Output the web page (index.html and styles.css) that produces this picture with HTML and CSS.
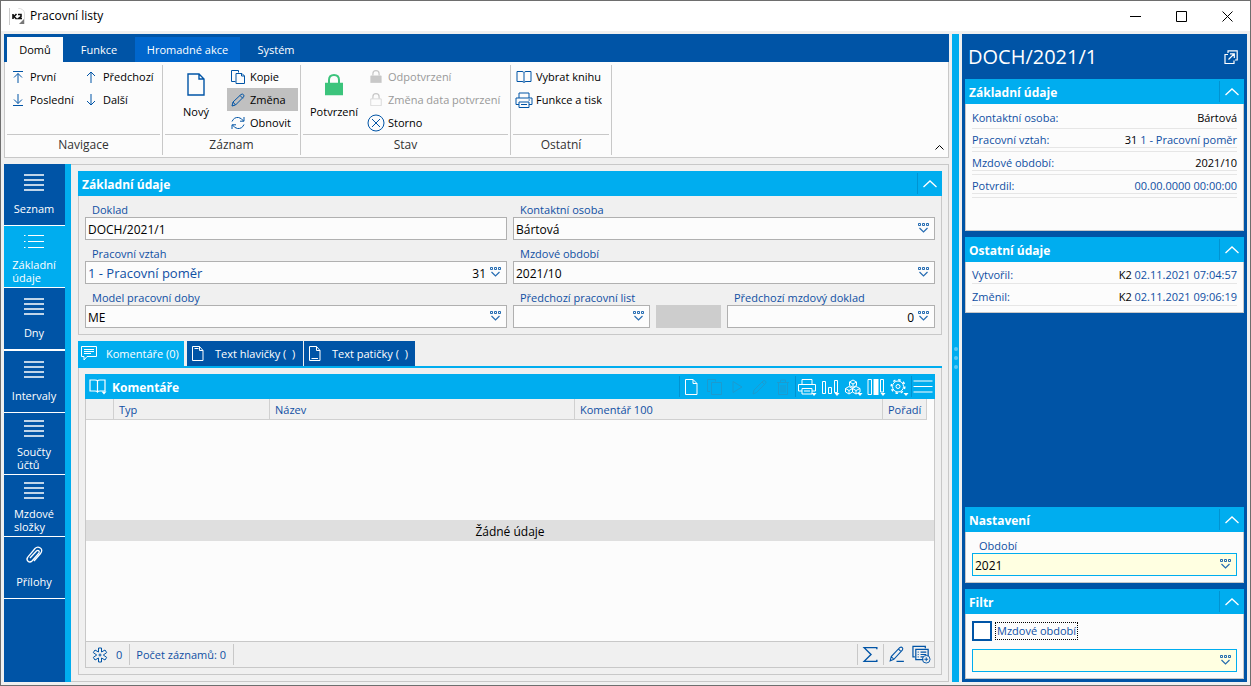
FILE: index.html
```html
<!DOCTYPE html>
<html lang="cs">
<head>
<meta charset="utf-8">
<title>Pracovní listy</title>
<link rel="stylesheet" href="styles.css">
</head>
<body>
<svg class="sprite" aria-hidden="true">
  <symbol id="lookup" viewBox="0 0 12 11"><path d="M.5 .5h2v2h-2zM4.500 .5h2v2h-2zM8.500 .5h2v2h-2z" stroke-width="1" stroke-opacity=".85"/><path d="M1.500 5L5.500 9L9.500 5" stroke-width="1.200" stroke-opacity=".85"/></symbol>
  <symbol id="chevron" viewBox="0 0 14 8"><path d="M.5 7L7 1L13.500 7" stroke-width="1.300"/></symbol>
  <symbol id="lines" viewBox="0 0 20 18"><path d="M0 1h20M0 6h20M0 11h20M0 16h20" stroke-width="1.400"/></symbol>
  <symbol id="pencil" viewBox="0 0 14 14"><path d="M1 13l1-4 8-7.500q1.500-1 2.500.2t0 2.300L4.500 12zM9 2.500l2.800 2.800M2 9l2.500 3"/></symbol>
  <symbol id="page" viewBox="0 0 18 23"><path d="M1 1h11l5 5v16H1zM12 1v5h5"/></symbol>
  <symbol id="copy" viewBox="0 0 14 14"><path d="M4.500 11.500H.5V.5h7v2M5 3.500h6l2.500 2.500v7.500H5zM10.500 3.500V6h3"/></symbol>
  <symbol id="printer" viewBox="0 0 18 16"><path d="M4 6V1h10v5M4 12.500H1V6h16v6.500h-3M4 10h10v5.500H4zM6 12.500h6M13.500 8h1.500"/></symbol>
  <symbol id="book" viewBox="0 0 16 13"><path d="M8 12V2Q7.500 1 6 1H1v10h5q1.500 0 2 1 .5-1 2-1h5V1h-5Q8.500 1 8 2"/></symbol>
  <symbol id="lock" viewBox="0 0 18 21"><path d="M4 9V6q0-5 5-5t5 5v3" stroke-width="2"/><path class="lock-body" d="M.5 9.500h17v11H.5z"/></symbol>
</svg>
<div class="window">
  <header class="titlebar">
    <svg class="logo" viewBox="0 0 17 17"><path d="M.5 0v17" stroke="#ccc"/><path d="M9 0q6 1 6.500 5v11" stroke="#ddd"/><path d="M15 11v5h-5z" fill="#777" stroke="none"/><path d="M4 6v5M7.500 6L5 8.500 7.500 11M9 6.500h3v2L9.500 10.500H13" stroke="#111" stroke-width="1.600"/></svg>
    <h1 class="window-title">Pracovní listy</h1>
    <div class="window-controls">
      <button aria-label="Minimalizovat"><svg viewBox="0 0 11 11"><path d="M0 5.500h11"/></svg></button>
      <button aria-label="Maximalizovat"><svg viewBox="0 0 11 11"><path d="M.5 .5h10v10H.5z"/></svg></button>
      <button aria-label="Zavřít"><svg viewBox="0 0 11 11"><path d="M.5 .5l10 10M10.500 .5l-10 10"/></svg></button>
    </div>
  </header>
  <div class="workspace">
    <div class="left">
      <nav class="ribbon-tabs">
        <button class="ribbon-tab active">Domů</button>
        <button class="ribbon-tab">Funkce</button>
        <button class="ribbon-tab highlight">Hromadné akce</button>
        <button class="ribbon-tab">Systém</button>
      </nav>
      <div class="ribbon">
        <section class="group nav-group">
          <div class="commands">
            <div class="command-column">
              <button class="command"><svg viewBox="0 0 12 12"><path d="M1 .5h10M6 12V2.500M2 6.500l4-4 4 4"/></svg>První</button>
              <button class="command"><svg viewBox="0 0 12 12"><path d="M1 11.500h10M6 0v9.500M2 5.500l4 4 4-4"/></svg>Poslední</button>
            </div>
            <div class="command-column">
              <button class="command"><svg viewBox="0 0 12 12"><path d="M6 12V1M2 5l4-4 4 4"/></svg>Předchozí</button>
              <button class="command"><svg viewBox="0 0 12 12"><path d="M6 0v11M2 7l4 4 4-4"/></svg>Další</button>
            </div>
          </div>
          <h2 class="group-label">Navigace</h2>
        </section>
        <section class="group record-group">
          <div class="commands">
            <button class="big-command"><svg class="page-icon"><use href="#page"/></svg>Nový</button>
            <div class="command-column">
              <button class="command"><svg><use href="#copy"/></svg>Kopie</button>
              <button class="command pressed"><svg><use href="#pencil"/></svg>Změna</button>
              <button class="command"><svg viewBox="0 0 14 14"><path d="M1 5.500Q3 1 7.500 1.500 10.500 2 12.500 5M13 1v4.200H9M13 8.500Q11 13 6.500 12.500 3.500 12 1.500 9M1 13V8.800h4"/></svg>Obnovit</button>
            </div>
          </div>
          <h2 class="group-label">Záznam</h2>
        </section>
        <section class="group state-group">
          <div class="commands">
            <button class="big-command confirm"><svg class="page-icon"><use href="#lock"/></svg>Potvrzení</button>
            <div class="command-column">
              <button class="command locked" disabled><svg><use href="#lock"/></svg>Odpotvrzení</button>
              <button class="command unlocked" disabled><svg><use href="#lock"/></svg>Změna data potvrzení</button>
              <button class="command"><svg class="wide" viewBox="0 0 18 18"><circle cx="9" cy="9" r="8"/><path d="M5 5l8 8M13 5l-8 8"/></svg>Storno</button>
            </div>
          </div>
          <h2 class="group-label">Stav</h2>
        </section>
        <section class="group other-group">
          <div class="commands">
            <div class="command-column">
              <button class="command"><svg class="book-icon"><use href="#book"/></svg>Vybrat knihu</button>
              <button class="command"><svg class="wide"><use href="#printer"/></svg>Funkce a tisk</button>
            </div>
          </div>
          <h2 class="group-label">Ostatní</h2>
        </section>
        <button class="collapse-ribbon" aria-label="Sbalit pás karet"><svg viewBox="0 0 9 5"><path d="M.5 4.500l4-4 4 4"/></svg></button>
      </div>
      <div class="content">
        <nav class="sidebar">
          <button class="side-item"><svg><use href="#lines"/></svg><span>Seznam</span></button>
          <button class="side-item active"><svg viewBox="0 0 20 18"><path d="M4 1.500h16M4 7.500h16M4 13.500h16M0 1.500h1.500M0 7.500h1.500M0 13.500h1.500" stroke-width="1.200"/></svg><span>Základní<br>údaje</span></button>
          <button class="side-item"><svg><use href="#lines"/></svg><span>Dny</span></button>
          <button class="side-item"><svg><use href="#lines"/></svg><span>Intervaly</span></button>
          <button class="side-item two-line"><svg><use href="#lines"/></svg><span>Součty<br>účtů</span></button>
          <button class="side-item two-line"><svg><use href="#lines"/></svg><span>Mzdové<br>složky</span></button>
          <button class="side-item"><svg viewBox="0 0 20 20"><path d="M6 13l6.500-7q1.300-1.200 2.300-.2t0 2.400L8 16q-2 2-4 .2t-.2-4L11 3.500q2.500-2.500 5.300-.5t.2 5.500l-6.500 7.500" stroke-width="1.300"/></svg><span>Přílohy</span></button>
        </nav>
        <main class="main">
          <section>
            <header class="bar"><h2>Základní údaje</h2><button class="collapse" aria-label="Sbalit"><svg><use href="#chevron"/></svg></button></header>
            <form class="fields">
              <div class="field"><label for="doc">Doklad</label><div class="box"><input id="doc" value="DOCH/2021/1"></div></div>
              <div class="field"><label for="person">Kontaktní osoba</label><div class="box"><input id="person" value="Bártová"><button type="button" aria-label="Vybrat"><svg><use href="#lookup"/></svg></button></div></div>
              <div class="field"><label for="rel">Pracovní vztah</label><div class="box"><input id="rel" class="link-value" value="1 - Pracovní poměr"><input class="number short" aria-label="Číslo vztahu" value="31"><button type="button" aria-label="Vybrat"><svg><use href="#lookup"/></svg></button></div></div>
              <div class="field"><label for="period">Mzdové období</label><div class="box"><input id="period" value="2021/10"><button type="button" aria-label="Vybrat"><svg><use href="#lookup"/></svg></button></div></div>
              <div class="field"><label for="model">Model pracovní doby</label><div class="box"><input id="model" value="ME"><button type="button" aria-label="Vybrat"><svg><use href="#lookup"/></svg></button></div></div>
              <div class="triple">
                <div class="field"><label for="prev">Předchozí pracovní list</label><div class="box"><input id="prev" value=""><button type="button" aria-label="Vybrat"><svg><use href="#lookup"/></svg></button></div></div>
                <div class="blank"></div>
                <div class="field"><label for="prevdoc">Předchozí mzdový doklad</label><div class="box"><input id="prevdoc" class="number" value="0"><button type="button" aria-label="Vybrat"><svg><use href="#lookup"/></svg></button></div></div>
              </div>
            </form>
          </section>
          <section class="comments">
            <nav class="tabs">
              <button class="tab active"><svg viewBox="0 0 16 15"><path d="M.5 .5h15v10H6l-3 3.500v-3.500H.5zM3 3.500h10M3 5.500h10M3 7.500h7"/></svg>Komentáře (0)</button>
              <button class="tab"><svg viewBox="0 0 16 15"><path d="M2.500 .5h7l3.500 4v10H2.500zM9.500 .5v4H13M4.500 2.500h4"/></svg>Text hlavičky (&nbsp; )</button>
              <button class="tab"><svg viewBox="0 0 16 15"><path d="M2.500 .5h7l3.500 4v10H2.500zM9.500 .5v4H13M4.500 12.500H11"/></svg>Text patičky (&nbsp; )</button>
            </nav>
            <div class="tab-panel">
              <div class="grid">
                <header class="bar grid-bar">
                  <svg class="bar-book" viewBox="0 0 18 16"><path d="M8.500 13V2Q8 1 6 1H1v11h5q2 0 2.500 1 .5-1 2.500-1h5V1h-5Q9 1 8.500 2" stroke-width="1.200"/><path d="M12.500 12.500h5L15 15.500z" fill="#fff" stroke="none"/></svg>
                  <h2>Komentáře</h2>
                  <div class="tools">
                    <div class="tool-set">
                      <button aria-label="Nový"><svg viewBox="0 0 20 18"><path d="M4.500 1.500h7.500l4 4v11H4.500zM12 1.500v4h4"/></svg></button>
                      <button disabled aria-label="Kopie"><svg viewBox="0 0 20 18"><path d="M6 13.500H3.500v-12h8v2M7.500 4.500h10v12h-10z"/></svg></button>
                      <button disabled aria-label="Spustit"><svg viewBox="0 0 20 18"><path d="M6 3.500l9 5.500-9 5.500z"/></svg></button>
                      <button disabled aria-label="Změna"><svg viewBox="0 0 20 18"><path d="M3 16l1-4 9-9q1.500-1 2.500.2t0 2.300l-9 9zM12 4l2.500 2.500"/></svg></button>
                      <button disabled aria-label="Smazat"><svg viewBox="0 0 20 18"><path d="M4 4.500h12M7.500 4V2h5v2M5.500 5v11.500h9V5M8 7v7.500M10 7v7.500M12 7v7.500"/></svg></button>
                    </div>
                    <div class="tool-set">
                      <button aria-label="Tisk"><svg viewBox="0 0 20 18"><path d="M5 6V1.500h10V6M5 13H1.500V6.500h17V13H15M5 10.500h10V16H5zM7 13h6"/><path d="M14.500 15h5L17 18z" fill="#fff" stroke="none"/></svg></button>
                      <button aria-label="Graf"><svg viewBox="0 0 20 18"><path d="M2.500 3.500h3v12h-3zM8.500 9.500h3v6h-3zM14.500 2.500h3v12h-3z"/><path d="M14.500 15h5L17 18z" fill="#fff" stroke="none"/></svg></button>
                      <button aria-label="Kostky"><svg viewBox="0 0 20 18"><path d="M10 2l3.500 2v3.500L10 9.500 6.500 7.500V4zM6 8.500l3.500 2V14L6 16l-3.500-2v-3.500zM13 8.500l4 2V14l-4 2-3.500-2v-3.500zM6.500 4L10 6l3.500-2M10 6v3.500M2.500 10.500l3.500 2 3.500-2 3.500 2 4-2M6 12.500V16M13 12.500V16"/><path d="M14.500 15h5L17 18z" fill="#fff" stroke="none"/></svg></button>
                      <button aria-label="Sloupce"><svg viewBox="0 0 20 18"><path d="M2 1.500h3.500v15H2zM14.500 1.500h3V14h-3z"/><path d="M7.500 1h5v16h-5z" fill="#fff" stroke="none"/><path d="M14.500 15h5L17 18z" fill="#fff" stroke="none"/></svg></button>
                      <button aria-label="Nastavení"><svg viewBox="0 0 20 18"><circle cx="9" cy="8.500" r="5.500"/><circle cx="9" cy="8.500" r="2"/><circle cx="9" cy="8.500" r="6.800" stroke-width="1.500" stroke-dasharray="2.500 2.840"/><path d="M14.500 15h5L17 18z" fill="#fff" stroke="none"/></svg></button>
                    </div>
                    <div class="tool-set"><button aria-label="Nabídka"><svg viewBox="0 0 20 18"><path d="M.5 3h19M.5 8.500h19M.5 14h19" stroke-width="1.200"/></svg></button></div>
                  </div>
                </header>
                <table class="table">
                  <colgroup><col class="c-mark"><col class="c-type"><col class="c-name"><col class="c-comment"><col class="c-order"></colgroup>
                  <thead><tr><th></th><th>Typ</th><th>Název</th><th>Komentář 100</th><th>Pořadí</th></tr></thead>
                </table>
                <div class="empty"><p>Žádné údaje</p></div>
                <footer class="status">
                  <div class="status-cell"><svg viewBox="0 0 16 16"><path d="M6.500 1h3v4l3.500-2 1.700 2.600L11.300 8l3.400 2.400L13 13l-3.500-2v4h-3v-4L3 13l-1.700-2.600L4.700 8 1.300 5.600 3 3l3.500 2z"/><circle cx="8" cy="8" r="1"/></svg>0</div>
                  <div class="status-cell">Počet záznamů: 0</div>
                  <div class="status-tools">
                    <button aria-label="Součet"><svg viewBox="0 0 18 18"><path d="M15 4V2.500H3L9.500 9 3 15.500h12V14" stroke-width="1.300"/></svg></button>
                    <button aria-label="Upravit"><svg viewBox="0 0 18 18"><path d="M3 15l1-4 8-8.500q1.500-1 2.500 0t0 2.300L6.500 13.500zM11 4l2.500 2.500M4 11l2.500 2.500M9 15.500h7"/></svg></button>
                    <button aria-label="Přidat sestavu"><svg viewBox="0 0 20 19"><path d="M3 12H1V1h13v2M12 15H4V4h13v7M6 7h1M9 7h6M6 9.500h1M9 9.500h6M6 12h1M9 12h3" stroke-width="1.300"/><circle cx="15" cy="14.500" r="4"/><path d="M15 12.500v4M13 14.500h4"/></svg></button>
                  </div>
                </footer>
              </div>
            </div>
          </section>
        </main>
      </div>
    </div>
    <div class="splitter"><i></i><i></i><i></i></div>
    <aside class="preview">
      <header class="preview-head"><h2>DOCH/2021/1</h2><button aria-label="Otevřít"><svg viewBox="0 0 14 14"><path d="M4 4.500H1v9h9v-3M4 3V.8h9.200V10H11M4.500 9.500L10 4M6 3.800h4.300V8" stroke-width="1.200"/></svg></button></header>
      <section class="card tall">
        <header class="bar"><h2>Základní údaje</h2><button class="collapse" aria-label="Sbalit"><svg><use href="#chevron"/></svg></button></header>
        <dl class="facts">
          <div><dt>Kontaktní osoba:</dt><dd><b>Bártová</b></dd></div>
          <div class="ruled"><dt>Pracovní vztah:</dt><dd><b>31</b> 1 - Pracovní poměr</dd></div>
          <div class="ruled"><dt>Mzdové období:</dt><dd><b>2021/10</b></dd></div>
          <div class="ruled"><dt>Potvrdil:</dt><dd>00.00.0000 00:00:00</dd></div>
        </dl>
      </section>
      <section class="card">
        <header class="bar"><h2>Ostatní údaje</h2><button class="collapse" aria-label="Sbalit"><svg><use href="#chevron"/></svg></button></header>
        <dl class="facts compact">
          <div><dt>Vytvořil:</dt><dd><b>K2</b> 02.11.2021 07:04:57</dd></div>
          <div><dt>Změnil:</dt><dd><b>K2</b> 02.11.2021 09:06:19</dd></div>
        </dl>
      </section>
      <section class="card bottom">
        <header class="bar"><h2>Nastavení</h2><button class="collapse" aria-label="Sbalit"><svg><use href="#chevron"/></svg></button></header>
        <div class="card-form"><div class="field"><label for="year">Období</label><div class="box yellow"><input id="year" value="2021"><button aria-label="Vybrat"><svg><use href="#lookup"/></svg></button></div></div></div>
      </section>
      <section class="card">
        <header class="bar"><h2>Filtr</h2><button class="collapse" aria-label="Sbalit"><svg><use href="#chevron"/></svg></button></header>
        <div class="card-form filter">
          <div class="check"><input type="checkbox" id="use-period"><label for="use-period">Mzdové období</label></div>
          <div class="box yellow"><input aria-label="Mzdové období" value=""><button aria-label="Vybrat"><svg><use href="#lookup"/></svg></button></div>
        </div>
      </section>
    </aside>
  </div>
</div>
</body>
</html>
```
FILE: styles.css
```css
:root {
  --navy: #0054a6;
  --cyan: #00adef;
  --ink: #0f4fa3;
  --line: #c8c8c8;
  --paper: #fcfcfc;
  --grey: #f0f0f0;
}
* { box-sizing: border-box; }
body, h1, h2, p, dl, dd { margin: 0; }
body { font: 12px/16px "Open Sans", "Noto Sans", sans-serif; color: #000; }
h1, h2 { font-size: 12px; font-weight: 400; }
button, input { font: inherit; color: inherit; background: none; border: 0; padding: 0; margin: 0; }
button { display: flex; align-items: center; white-space: nowrap; }
input { min-width: 0; outline: 0; }
svg { fill: none; stroke: currentColor; flex: none; display: block; }
.sprite { position: absolute; width: 0; height: 0; }

.window { min-height: 100vh; display: flex; flex-direction: column; background: var(--grey); border: 1px solid #6e6e6e; }
.titlebar { display: flex; align-items: center; height: 30px; background: #fff; padding-left: 8px; }
.logo { width: 17px; height: 17px; }
.window-title { margin-left: 4px; flex: 1; }
.window-controls { display: flex; }
.window-controls button { width: 46px; height: 30px; justify-content: center; }
.window-controls svg { width: 11px; height: 11px; }

.workspace { flex: 1; display: flex; gap: 3px; padding: 3px; }
.left { flex: 1; min-width: 0; display: flex; flex-direction: column; }

.ribbon-tabs { display: flex; height: 28px; padding: 3px 3px 0; background: var(--navy); color: #fff; font-size: 11px; }
.ribbon-tab { width: 72px; justify-content: center; }
.ribbon-tab.active { width: 56px; background: var(--paper); color: #000; }
.ribbon-tab.highlight { width: 105px; background: #0066cc; }

.ribbon { display: flex; background: var(--paper); border: 1px solid var(--line); border-top: 0; padding: 3px 0 2px; }
.group { display: flex; flex-direction: column; padding: 0 2px; border-right: 1px solid var(--line); }
.nav-group { width: 158px; }
.record-group { width: 138px; }
.state-group { width: 210px; }
.other-group { width: 101px; }
.commands { display: flex; height: 69px; font-size: 11px; }
.group-label { height: 21px; line-height: 20px; border-top: 1px solid var(--line); text-align: center; color: #333; }
.command { height: 23px; gap: 5px; padding: 0 4px; }
.command svg { width: 14px; height: 14px; color: var(--navy); }
.nav-group .command-column { width: 73px; }
.nav-group .command { gap: 6px; padding-left: 5px; }
.nav-group .command svg { width: 12px; height: 12px; }
.command svg.wide { width: 18px; height: 18px; margin: 0 -2px; }
.command svg.book-icon { width: 16px; height: 14px; margin: 0 -1px; }
.command.pressed { background: #c0c0c0; }
.record-group .command { width: 71px; }
.command:disabled { color: #999; }
.command:disabled svg { color: #c8c8c8; height: 13px; }
.lock-body { fill: var(--lock-fill, currentColor); }
.unlocked { --lock-fill: none; }
.big-command { flex-direction: column; flex: 1; padding-top: 8px; gap: 8px; }
.page-icon { width: 18px; height: 23px; color: var(--navy); stroke-width: 1.4px; }
.big-command.confirm { flex: 0 0 62px; }
.confirm .page-icon { color: #3cc47c; }
.collapse-ribbon { margin: auto 4px 0 auto; height: 16px; }
.collapse-ribbon svg { width: 9px; height: 5px; }

.content { flex: 1; display: flex; margin-top: 6px; }
.sidebar { width: 67px; background: var(--navy); border-right: 6px solid var(--cyan); color: #fff; }
.side-item { width: 100%; height: 62px; flex-direction: column; border-bottom: 1px solid #fff; padding: 10px 1px 0 0; line-height: 13px; font-size: 11px; text-align: left; }
.side-item svg { width: 20px; height: 18px; }
.side-item span { flex: 1; display: flex; align-items: center; }
.side-item.active { background: var(--cyan); padding-top: 8px; }
.side-item.two-line { padding-top: 7px; }
.side-item.active span, .side-item.two-line span { padding-top: 3px; }
.side-item:nth-child(3) { height: 63px; border-bottom-width: 2px; }
.side-item:nth-child(7) { padding-top: 8px; }
.side-item:nth-child(7) svg { height: 20px; }

.main { flex: 1; min-width: 0; display: flex; flex-direction: column; gap: 6px; border: 1px solid var(--line); border-left: 0; padding: 6px 6px 6px 7px; }
.bar { display: flex; align-items: center; height: 25px; background: var(--cyan); color: #fff; padding-left: 4px; }
.bar h2 { flex: 1; font-weight: 700; padding-top: 2px; }
.collapse { width: 25px; height: 21px; border-left: 1px solid #0093d2; justify-content: center; }
.collapse svg { width: 14px; height: 8px; }
.fields { display: grid; grid-template-columns: 1fr 1fr; gap: 5px 6px; border: 1px solid var(--line); border-top: 0; padding: 5px 6px 6px; }
.field { display: flex; flex-direction: column; color: var(--ink); }
.field label { padding-left: 7px; height: 16px; line-height: 18px; font-size: 11px; }
.box { display: flex; align-items: center; height: 23px; background: var(--paper); border: 1px solid #b0b0b0; padding: 0 4px 0 2px; color: #000; }
.box input { flex: 1; width: 100%; height: 21px; padding-top: 1px; }
.box .link-value { color: var(--ink); font-size: 13px; }
.box .number { text-align: right; padding-right: 4px; }
.box .short { flex: 0 0 40px; }
.box button { color: var(--navy); height: 21px; }
.box svg { width: 12px; height: 11px; }
.triple { display: grid; grid-template-columns: 137fr 65fr 208fr; gap: 6px; align-items: end; }
.blank { height: 23px; background: #cdcdcd; }

.comments { flex: 1; display: flex; flex-direction: column; }
.tabs { display: flex; gap: 1px; height: 27px; border-bottom: 2px solid var(--cyan); }
.tab { width: 111px; background: var(--navy); color: #fff; padding-left: 3px; gap: 9px; font-size: 11px; }
.tab svg { width: 16px; height: 15px; }
.tab.active { width: 106px; background: var(--cyan); margin-right: 2px; }
.tab:nth-child(2) { width: 116px; }
.tab-panel { flex: 1; display: flex; border: 1px solid var(--line); border-top: 0; padding: 6px; }
.grid { flex: 1; display: flex; flex-direction: column; border: 1px solid var(--line); border-top: 0; background: var(--paper); }
.grid-bar { margin: 0 -1px; gap: 5px; }
.bar-book { width: 18px; height: 16px; }
.tools { display: flex; }
.tool-set { display: flex; height: 21px; gap: 3px; border-left: 1px solid #0093d2; padding: 0 2px 0 1px; }
.tool-set svg { width: 20px; height: 18px; }
.tool-set button:disabled { color: #1b9bd0; }
.table { width: calc(100% - 7px); table-layout: fixed; border-collapse: separate; border-spacing: 0; background: var(--grey); font-size: 11px; }
.table th { height: 21px; padding: 1px 0 0 5px; font-weight: 400; text-align: left; color: var(--ink); border: 1px solid #d0d0d0; border-width: 0 1px 1px 0; }
.c-mark { width: 28px; }
.c-type { width: 156px; }
.c-name { width: 305px; }
.c-order { width: 44px; }
.empty { flex: 1; display: flex; align-items: center; }
.empty p { flex: 1; background: #dfdfdf; line-height: 21px; text-align: center; padding-top: 1px; height: 21px; }
.status { display: flex; align-items: center; height: 26px; background: var(--grey); border-top: 1px solid var(--line); color: var(--ink); font-size: 11px; }
.status-cell { display: flex; align-items: center; gap: 8px; height: 21px; padding: 0 7px 0 6px; border-right: 1px solid var(--line); }
.status-cell svg { width: 16px; height: 16px; color: var(--navy); }
.status-tools { margin-left: auto; display: flex; align-items: center; color: var(--navy); }
.status-tools button { height: 21px; padding: 0 3px; }
.status-tools button:first-child { border: 1px solid var(--line); border-width: 0 1px; }
.status-tools svg { width: 19px; height: 19px; }

.splitter { width: 7px; background: var(--cyan); display: flex; flex-direction: column; align-items: center; justify-content: center; gap: 5px; }
.splitter i { width: 4px; height: 4px; border-radius: 50%; background: #5cc8f5; }

.preview { width: 285px; background: var(--navy); padding: 0 3px 3px; display: flex; flex-direction: column; gap: 6px; }
.preview-head { display: flex; align-items: center; justify-content: space-between; height: 39px; padding: 6px 6px 0 3px; color: #fff; }
.preview-head h2 { font-size: 20px; }
.preview-head svg { width: 14px; height: 14px; }
.card { background: var(--paper); border: 1px solid var(--line); border-top: 0; }
.card .bar { margin: 0 -1px; }
.tall { min-height: 152px; }
.bottom { margin-top: auto; }
.facts { padding: 3px 6px 6px; color: var(--ink); font-size: 11px; }
.facts div { display: flex; justify-content: space-between; height: 22px; line-height: 22px; border-bottom: 1px solid #e6e6e6; }
.facts b { font-weight: 400; color: #000; }
.facts .ruled { height: 19px; }
.facts .ruled + .ruled { border-top: 1px solid #e6e6e6; margin-top: 3px; height: 20px; }
.facts .ruled:last-child { box-shadow: 0 3px #fcfcfc, 0 4px #e6e6e6; }
.facts.compact { padding-top: 0; }
.compact div { line-height: 26px; }
.card-form { padding: 5px 6px 6px; }
.box.yellow { background: #ffffe1; border-color: var(--cyan); }
.filter { padding-top: 7px; display: grid; gap: 8px; }
.check { display: flex; align-items: center; gap: 4px; color: var(--ink); font-size: 11px; }
.check input { appearance: none; width: 20px; height: 20px; border: 2px solid var(--navy); background: #fff; }
.check label { outline: 1px dotted #000; padding: 0 1px; }
```
